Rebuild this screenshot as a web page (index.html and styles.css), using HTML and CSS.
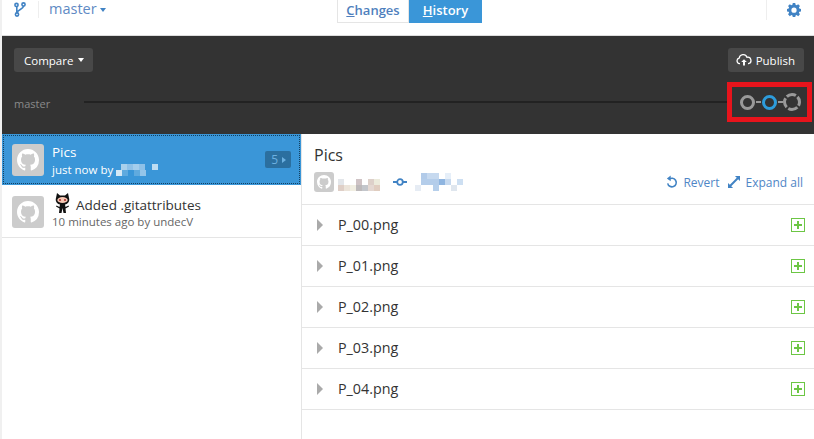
FILE: index.html
```html
<!DOCTYPE html>
<html lang="en">
<head>
    <meta charset="UTF-8">
    <title>GitHub Desktop</title>
    <link rel="stylesheet" href="styles.css">
</head>
<body>
    <svg class="defs" width="0" height="0">
        <symbol id="mark" viewBox="0 0 16 16">
            <path d="M8 0C3.58 0 0 3.58 0 8c0 3.54 2.29 6.53 5.47 7.59.4.07.55-.17.55-.38 0-.19-.01-.82-.01-1.49-2.01.37-2.53-.49-2.69-.94-.09-.23-.48-.94-.82-1.13-.28-.15-.68-.52-.01-.53.63-.01 1.08.58 1.23.82.72 1.21 1.87.87 2.33.66.07-.52.28-.87.51-1.07-1.78-.2-3.64-.89-3.64-3.95 0-.87.31-1.59.82-2.15-.08-.2-.36-1.02.08-2.12 0 0 .67-.21 2.2.82.64-.18 1.32-.27 2-.27.68 0 1.36.09 2 .27 1.53-1.04 2.2-.82 2.2-.82.44 1.1.16 1.92.08 2.12.51.56.82 1.27.82 2.15 0 3.07-1.87 3.75-3.65 3.95.29.25.54.73.54 1.48 0 1.07-.01 1.93-.01 2.2 0 .21.15.46.55.38A8.013 8.013 0 0016 8c0-4.42-3.58-8-8-8z"/>
        </symbol>
        <symbol id="plus" viewBox="0 0 14 14">
            <rect x="0.5" y="0.5" width="13" height="13" fill="none" stroke="#6cc644"/>
            <path d="M6 3h2v3h3v2H8v3H6V8H3V6h3z" fill="#6cc644"/>
        </symbol>
    </svg>

    <header class="topbar">
        <div class="branch">
            <svg class="branch-icon" width="12" height="15" viewBox="0 0 12 15">
                <circle cx="2.5" cy="3" r="1.6"/>
                <circle cx="9.5" cy="2.5" r="1.6"/>
                <circle cx="3" cy="12.5" r="1.6"/>
                <path d="M2.8 4.6v6.300M9.5 4.100c0 3.400-5.500 2.900-6.500 6.800"/>
            </svg>
            <span class="branch-sep"></span>
            <span class="branch-name">master</span>
            <span class="caret"></span>
        </div>
        <div class="tabs">
            <span class="tab"><u>C</u>hanges</span>
            <span class="tab tab-on"><u>H</u>istory</span>
        </div>
        <div class="gear-box">
            <svg width="14" height="14" viewBox="0 0 16 16">
                <path fill="#4183c4" fill-rule="evenodd" d="M6.600 0h2.800l.4 2.100 1.200.5 1.800-1.200 2 2-1.200 1.800.5 1.200 1.900.4v2.800l-1.900.4-.5 1.200 1.200 1.800-2 2-1.800-1.200-1.200.5-.4 1.900H6.600l-.4-1.900-1.200-.5-1.800 1.200-2-2 1.200-1.800-.5-1.200L0 9.600V6.800l1.900-.4.5-1.200-1.200-1.800 2-2L5 2.600l1.200-.5zM8 5.200a3 3 0 100 6 3 3 0 000-6z"/>
            </svg>
        </div>
    </header>

    <section class="graph">
        <div class="graph-top">
            <button class="dark-btn">Compare <span class="caret caret-white"></span></button>
            <button class="dark-btn">
                <svg width="16" height="14" viewBox="0 0 20 16">
                    <path d="M5 12.500H4.500a3.500 3.500 0 01-.5-6.900 5 5 0 019.700-1A3.800 3.800 0 0115.500 12.500H15" fill="none" stroke="#fff" stroke-width="1.600"/>
                    <path d="M10 7l3.500 3.500h-2.300V15H8.800v-4.500H6.500z" fill="#fff"/>
                </svg>
                Publish
            </button>
        </div>
        <div class="graph-line">
            <span class="graph-label">master</span>
            <span class="line"></span>
            <div class="nodes">
                <span class="node"></span>
                <span class="link"></span>
                <span class="node node-blue"></span>
                <span class="link"></span>
                <svg class="node-dash" width="18" height="18" viewBox="0 0 18 18">
                    <circle cx="9" cy="9" r="7.500" fill="none" stroke="#999" stroke-width="3" stroke-dasharray="9.800 2" stroke-dashoffset="6"/>
                </svg>
            </div>
        </div>
    </section>

    <main class="panes">
        <aside class="commits">
            <div class="commit commit-on">
                <svg class="avatar"><use href="#mark" x="5" y="5" width="22" height="22"/></svg>
                <div class="commit-text">
                    <div class="commit-title">Pics</div>
                    <div class="commit-meta">just now by
                        <svg class="blur" width="42" height="13">
                            <rect x="5" y="0" width="6" height="6" fill="#a9d0ec"/>
                            <rect x="11" y="0" width="6" height="6" fill="#8ec1e8"/>
                            <rect x="17" y="0" width="6" height="6" fill="#a3cdec"/>
                            <rect x="23" y="0" width="6" height="6" fill="#8ec1e8"/>
                            <rect x="36" y="0" width="6" height="6" fill="#bcdcf2"/>
                            <rect x="0" y="6" width="6" height="6" fill="#d4e8f6"/>
                            <rect x="6" y="6" width="6" height="6" fill="#5faadf"/>
                            <rect x="18" y="6" width="6" height="6" fill="#60aade"/>
                            <rect x="24" y="6" width="6" height="6" fill="#94c5e9"/>
                        </svg>
                    </div>
                </div>
                <span class="count">5 <span class="count-arrow"></span></span>
            </div>
            <div class="commit">
                <svg class="avatar"><use href="#mark" x="5" y="5" width="22" height="22"/></svg>
                <div class="commit-text">
                    <div class="commit-title">
                        <svg class="emoji" width="17" height="20" viewBox="0 0 17 20">
                            <path d="M3 0l3 2.500h5L14 0l1 5c1 3-1 6-4 6.500l.5 2.500 3-1.500.5 1-3.500 2 .5 4.500H9.500L8.500 15l-1 5H5l.5-4.500-3.500-2 .5-1 3 1.500.5-2.500C3 11 1 8 2 5z" fill="#111"/>
                            <ellipse cx="8.500" cy="7" rx="5.200" ry="3" fill="#f6c9b4"/>
                            <circle cx="6" cy="7" r="1.100" fill="#a33"/>
                            <circle cx="11" cy="7" r="1.100" fill="#a33"/>
                        </svg>
                        Added .gitattributes
                    </div>
                    <div class="commit-meta">10 minutes ago by undecV</div>
                </div>
            </div>
        </aside>

        <section class="detail">
            <div class="detail-head">
                <h2 class="detail-title">Pics</h2>
                <div class="detail-info">
                    <svg class="avatar avatar-small"><use href="#mark" x="3" y="3" width="14" height="14"/></svg>
                    <svg class="blur-author" width="46" height="19">
                        <rect x="0" y="6" width="6" height="6" fill="#e3e6ea"/>
                        <rect x="18" y="6" width="6" height="6" fill="#cfc3c5"/>
                        <rect x="30" y="6" width="6" height="6" fill="#ddd0c9"/>
                        <rect x="36" y="6" width="6" height="6" fill="#ecebdc"/>
                        <rect x="0" y="12" width="6" height="6" fill="#dfcfc7"/>
                        <rect x="6" y="12" width="6" height="6" fill="#ece4da"/>
                        <rect x="12" y="12" width="6" height="6" fill="#f1eee2"/>
                        <rect x="18" y="12" width="6" height="6" fill="#bdb9ba"/>
                        <rect x="24" y="12" width="6" height="6" fill="#c3c6cb"/>
                        <rect x="30" y="12" width="6" height="6" fill="#e4d8d2"/>
                        <rect x="36" y="12" width="6" height="6" fill="#e0cdc0"/>
                    </svg>
                    <svg class="commit-icon" width="14" height="8" viewBox="0 0 14 8">
                        <path d="M0 4h4M10 4h4" stroke="#4183c4" stroke-width="1.800"/>
                        <circle cx="7" cy="4" r="2.800" fill="none" stroke="#4183c4" stroke-width="1.800"/>
                    </svg>
                    <svg class="blur-repo" width="48" height="19">
                        <rect x="6" y="0" width="6" height="6" fill="#b2cbe9"/>
                        <rect x="12" y="0" width="12" height="6" fill="#c6d9ef"/>
                        <rect x="30" y="0" width="6" height="6" fill="#e6eff9"/>
                        <rect x="6" y="6" width="18" height="6" fill="#b4cdea"/>
                        <rect x="24" y="6" width="6" height="6" fill="#8fb5e0"/>
                        <rect x="30" y="6" width="6" height="6" fill="#c6d9ef"/>
                        <rect x="42" y="6" width="6" height="6" fill="#cddff2"/>
                        <rect x="0" y="12" width="6" height="6" fill="#e6ecf4"/>
                        <rect x="18" y="12" width="6" height="6" fill="#b6cfeb"/>
                        <rect x="36" y="12" width="6" height="6" fill="#dfe6ee"/>
                    </svg>
                    <div class="actions">
                        <span class="action">
                            <svg width="12" height="14" viewBox="0 0 14 15">
                                <path d="M3.500 4.500A5 5 0 112 9" fill="none" stroke="#4183c4" stroke-width="1.800"/>
                                <path d="M5.500 0v6.500L1 3.500z" fill="#4183c4"/>
                            </svg>
                            Revert
                        </span>
                        <span class="action">
                            <svg width="12" height="12" viewBox="0 0 13 13">
                                <path d="M7.500 0H13v5.500l-2-2L3.500 11 5.500 13H0V7.500l2 2L9.500 2z" fill="#4183c4"/>
                            </svg>
                            Expand all
                        </span>
                    </div>
                </div>
            </div>
            <ul class="files">
                <li class="file"><span class="tri"></span><span class="file-name">P_00.png</span><svg class="plus"><use href="#plus"/></svg></li>
                <li class="file"><span class="tri"></span><span class="file-name">P_01.png</span><svg class="plus"><use href="#plus"/></svg></li>
                <li class="file"><span class="tri"></span><span class="file-name">P_02.png</span><svg class="plus"><use href="#plus"/></svg></li>
                <li class="file"><span class="tri"></span><span class="file-name">P_03.png</span><svg class="plus"><use href="#plus"/></svg></li>
                <li class="file"><span class="tri"></span><span class="file-name">P_04.png</span><svg class="plus"><use href="#plus"/></svg></li>
            </ul>
        </section>
    </main>
</body>
</html>
```

FILE: styles.css
```css
html, body {
    height: 100%;
}
body {
    margin: 0;
    overflow: hidden;
    display: flex;
    flex-direction: column;
    font-family: "Open Sans", "Noto Sans", sans-serif;
    color: #333;
    background-color: #fff;
    border-left: 2px solid #f0f0f0;
    box-sizing: border-box;
}
.defs {
    position: absolute;
}
.topbar {
    height: 35px;
    flex: none;
    display: flex;
    align-items: flex-start;
    justify-content: space-between;
    border-bottom: 1px solid #ddd;
    position: relative;
}
.branch {
    display: flex;
    align-items: center;
    height: 17px;
    padding-top: 1px;
    color: #4183c4;
    font-size: 14.500px;
}
.branch-name {
    margin-top: -2px;
    color: #5f8ac4;
}
.branch-icon {
    margin-left: 12px;
    fill: none;
    stroke: #4183c4;
    stroke-width: 1.6;
}
.branch-sep {
    width: 1px;
    height: 17px;
    background-color: #eee;
    margin: 0 10px 0 12px;
}
.caret {
    display: inline-block;
    border-left: 3.5px solid transparent;
    border-right: 3.5px solid transparent;
    border-top: 4px solid #4183c4;
    margin-left: 3px;
}
.caret-white {
    border-top-color: #fff;
    margin-left: 1px;
}
.tabs {
    display: flex;
    position: absolute;
    left: 335px;
    top: 0;
    height: 23px;
    font-size: 13px;
    font-weight: 600;
}
.tab {
    width: 72px;
    text-align: center;
    line-height: 21px;
    color: #4f7fbd;
    border: 1px solid #e5e5e5;
    border-top: none;
    box-sizing: border-box;
}
.tab-on {
    width: 73px;
    color: #fff;
    background-color: #3a96d8;
    border: none;
}
.gear-box {
    display: flex;
    align-items: center;
    border-left: 1px solid #eee;
    height: 20px;
    padding: 0 13px 0 20px;
}
.graph {
    height: 98px;
    flex: none;
    background-color: #333;
    box-sizing: border-box;
    padding: 12px 10px 0 12px;
}
.graph-top {
    display: flex;
    justify-content: space-between;
}
.dark-btn {
    display: flex;
    align-items: center;
    gap: 4px;
    height: 24px;
    padding: 0 9px 0 10px;
    font-family: inherit;
    font-size: 11.500px;
    color: #fff;
    background-color: #484848;
    border: none;
    border-radius: 3px;
}
.dark-btn svg {
    margin-left: -2px;
}
.graph-line {
    display: flex;
    align-items: center;
    margin-top: 10px;
}
.graph-label {
    font-size: 11px;
    color: #8a8a8a;
    width: 70px;
    margin-top: 2px;
}
.line {
    flex: 1;
    height: 2px;
    background-color: #222;
}
.nodes {
    display: flex;
    align-items: center;
    outline: 5px solid #e8141c;
    outline-offset: -5px;
    padding: 0 11px 0 13px;
    height: 40px;
    box-sizing: border-box;
    margin-right: -8px;
}
.node {
    width: 15px;
    height: 15px;
    box-sizing: border-box;
    border: 3px solid #999;
    border-radius: 50%;
}
.node-blue {
    border-color: #2d9cdb;
}
.node-dash {
    margin-left: -1px;
}
.link {
    width: 5px;
    height: 2px;
    background-color: #999;
    margin: 0 1px;
}
.panes {
    flex: 1;
    display: flex;
    min-height: 0;
}
.commits {
    width: 299px;
    flex: none;
    border-right: 1px solid #e5e5e5;
}
.commit {
    height: 53px;
    box-sizing: border-box;
    display: flex;
    align-items: center;
    padding: 1px 10px 0 10px;
    border-bottom: 1px solid #e5e5e5;
}
.commit-on {
    height: 51px;
    padding-top: 0;
    color: #fff;
    background-color: #3a96d8;
    border-bottom: none;
    outline: 1px dotted #13405f;
    outline-offset: -2px;
}
.avatar {
    width: 32px;
    height: 32px;
    flex: none;
    background-color: #ccc;
    border-radius: 3px;
    fill: #fff;
}
.avatar-small {
    width: 20px;
    height: 20px;
}
.commit-text {
    flex: 1;
    margin-left: 8px;
    padding-top: 3px;
}
.commit-title {
    font-size: 13.500px;
    line-height: 18px;
    display: flex;
    align-items: center;
    gap: 5px;
}
.commit-meta {
    font-size: 11.500px;
    line-height: 16px;
    color: #666;
    display: flex;
    align-items: center;
    gap: 3px;
}
.commit-on .commit-meta {
    line-height: 18px;
    color: #fff;
}
.emoji {
    margin: -6px 0 -2px 2px;
}
.count {
    display: flex;
    align-items: center;
    gap: 4px;
    height: 17px;
    padding: 0 5px 0 6px;
    font-size: 12px;
    color: #6cb0e0;
    background-color: #2b6f9f;
    border-radius: 2px;
}
.count-arrow {
    border-left: 4px solid #6cb0e0;
    border-top: 3px solid transparent;
    border-bottom: 3px solid transparent;
}
.detail {
    flex: 1;
    min-width: 0;
}
.detail-head {
    height: 71px;
    box-sizing: border-box;
    padding: 10px 11px 0 12px;
    border-bottom: 1px solid #e5e5e5;
}
.detail-title {
    margin: 0;
    font-size: 16px;
    font-weight: 400;
    line-height: 22px;
}
.detail-info {
    display: flex;
    align-items: center;
    margin-top: 6px;
    height: 20px;
}
.blur-author {
    margin-left: 4px;
}
.commit-icon {
    margin: 0 8px 0 9px;
}
.actions {
    margin-left: auto;
    display: flex;
    gap: 9px;
    font-size: 12px;
    color: #4f86c6;
}
.action {
    display: flex;
    align-items: center;
    gap: 5px;
}
.files {
    list-style: none;
    margin: 0;
    padding: 0;
}
.file {
    height: 41px;
    box-sizing: border-box;
    display: flex;
    align-items: center;
    padding: 0 9px 0 15px;
    border-bottom: 1px solid #e5e5e5;
    font-size: 14.300px;
}
.tri {
    border-left: 6px solid #aaa;
    border-top: 6px solid transparent;
    border-bottom: 6px solid transparent;
}
.file-name {
    flex: 1;
    margin: -2px 0 0 15px;
}
.plus {
    width: 14px;
    height: 14px;
}
```
